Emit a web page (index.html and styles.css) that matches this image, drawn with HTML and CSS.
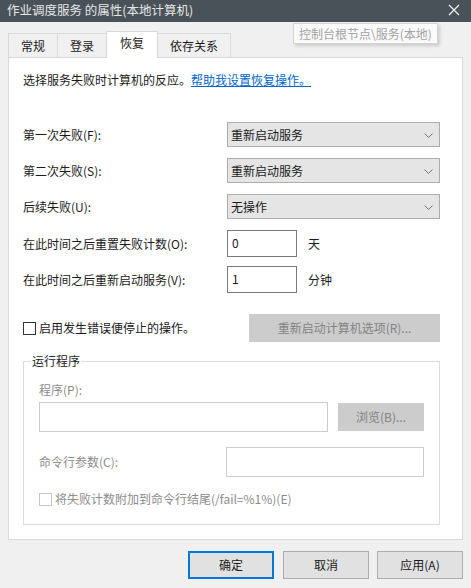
FILE: index.html
```html
<!DOCTYPE html>
<html lang="zh-CN">
<head>
<meta charset="utf-8">
<title>作业调度服务 的属性(本地计算机)</title>
<link rel="stylesheet" href="styles.css">
</head>
<body>
<div class="window">
  <div class="titlebar">
    <span class="title">作业调度服务 的属性(本地计算机)</span>
    <svg class="close" width="12" height="12" viewBox="0 0 12 12"><path d="M1 1L11 11M11 1L1 11" stroke="#f2f2f2" stroke-width="1.2" fill="none"/></svg>
  </div>
  <div class="tooltip">控制台根节点\服务(本地)</div>
  <div class="tabs">
    <div class="tab">常规</div>
    <div class="tab">登录</div>
    <div class="tab active">恢复</div>
    <div class="tab">依存关系</div>
  </div>
  <div class="panel">
    <p class="intro">选择服务失败时计算机的反应。<a class="link" href="#">帮助我设置恢复操作。</a></p>

    <div class="row row-first">
      <span class="label">第一次失败(F):</span>
      <div class="select"><span>重新启动服务</span><svg width="9" height="5" viewBox="0 0 9 5"><path d="M0.5 0.5L4.5 4.5L8.5 0.5" stroke="#777" fill="none"/></svg></div>
    </div>
    <div class="row">
      <span class="label">第二次失败(S):</span>
      <div class="select"><span>重新启动服务</span><svg width="9" height="5" viewBox="0 0 9 5"><path d="M0.5 0.5L4.5 4.5L8.5 0.5" stroke="#777" fill="none"/></svg></div>
    </div>
    <div class="row">
      <span class="label">后续失败(U):</span>
      <div class="select"><span>无操作</span><svg width="9" height="5" viewBox="0 0 9 5"><path d="M0.5 0.5L4.5 4.5L8.5 0.5" stroke="#777" fill="none"/></svg></div>
    </div>
    <div class="row row-input">
      <span class="label">在此时间之后重置失败计数(O):</span>
      <div class="input">0</div>
      <span class="unit">天</span>
    </div>
    <div class="row row-input2">
      <span class="label">在此时间之后重新启动服务(V):</span>
      <div class="input">1</div>
      <span class="unit">分钟</span>
    </div>

    <div class="row row-check">
      <label class="check"><span class="box"></span>启用发生错误便停止的操作。</label>
      <div class="btn btn-disabled btn-restart">重新启动计算机选项(R)...</div>
    </div>

    <fieldset class="group">
      <legend>运行程序</legend>
      <div class="dim prog-label">程序(P):</div>
      <div class="prog-row">
        <div class="input input-dis prog-input"></div>
        <div class="btn btn-disabled btn-browse">浏览(B)...</div>
      </div>
      <div class="cmd-row">
        <span class="dim">命令行参数(C):</span>
        <div class="input input-dis cmd-input"></div>
      </div>
      <label class="check check-dis"><span class="box"></span>将失败计数附加到命令行结尾(/fail=%1%)(E)</label>
    </fieldset>
  </div>
  <div class="buttons">
    <div class="btn btn-ok">确定</div>
    <div class="btn">取消</div>
    <div class="btn">应用(A)</div>
  </div>
</div>
</body>
</html>
```
FILE: styles.css
```css
* { box-sizing: border-box; }
html, body { margin: 0; padding: 0; }
body {
  width: 471px;
  height: 588px;
  overflow: hidden;
  background: #f0f0f0;
  font-family: "Noto Sans CJK SC", "Noto Sans", sans-serif;
  font-size: 12px;
  line-height: 16px;
  color: #1a1a1a;
}
.window {
  position: relative;
  height: 588px;
}
.titlebar {
  height: 22px;
  background: #4a5259;
  display: flex;
  align-items: center;
  justify-content: space-between;
  padding: 0 11px 0 7px;
}
.title {
  color: #e6e6e6;
  font-size: 12.5px;
  line-height: 16px;
  margin-top: -2px;
}
.close { margin-top: -3px; }
.tooltip {
  position: absolute;
  left: 293px;
  top: 23px;
  padding: 2px 5px 1px 5px;
  background: #fafafa;
  border: 1px solid #d4d4d4;
  color: #a3a3a3;
  font-size: 12px;
  line-height: 16px;
  box-shadow: 2px 2px 3px rgba(0,0,0,0.15);
  z-index: 5;
}
.tabs {
  display: flex;
  align-items: flex-end;
  height: 35px;
  padding-left: 8px;
}
.tab {
  height: 24px;
  padding: 0 12px;
  border: 1px solid #d9d9d9;
  border-bottom: none;
  background: #f0f0f0;
  margin-right: -1px;
  line-height: 24px;
  font-size: 12px;
}
.tab.active {
  height: 27px;
  background: #fff;
  margin-bottom: -1px;
  position: relative;
  z-index: 2;
  line-height: 22px;
  padding: 0 13px;
}
.panel {
  margin: 0 8px 0 8px;
  width: 455px;
  height: 483px;
  background: #fff;
  border: 1px solid #d9d9d9;
  padding: 14px 0 0 14px;
}
.intro { margin: 0; }
.link { color: #0066cc; text-decoration: underline; }
.row {
  display: flex;
  align-items: center;
  margin-top: 11px;
}
.row-first { margin-top: 34px; }
.row-input2 { margin-top: 9px; }
.label { width: 204px; flex: none; }
.select {
  width: 213px;
  height: 25px;
  background: #e5e5e5;
  border: 1px solid #adadad;
  display: flex;
  align-items: center;
  justify-content: space-between;
  padding: 0 6px 0 3px;
}
.select svg { margin-top: 1px; }
.input {
  width: 70px;
  height: 27px;
  border: 1px solid #7a7a7a;
  background: #fff;
  padding: 4px 0 0 4px;
}
.unit { margin-left: 11px; }
.row-check { margin-top: 21px; justify-content: space-between; width: 417px; }
.check { display: flex; align-items: center; }
.box {
  width: 13px;
  height: 13px;
  border: 1px solid #333;
  background: #fff;
  margin-right: 3px;
}
.btn {
  width: 86px;
  height: 28px;
  background: #e1e1e1;
  border: 1px solid #adadad;
  display: flex;
  align-items: center;
  justify-content: center;
}
.btn-disabled {
  background: #cccccc;
  border-color: #cccccc;
  color: #838383;
}
.btn-restart { width: 191px; }
.group {
  margin: 11px 0 0 0;
  width: 417px;
  border: 1px solid #dcdcdc;
  padding: 0 15px 17px 15px;
}
.group legend {
  padding: 0 1px;
  margin-left: -8px;
  color: #222;
}
.dim { color: #8c8c8c; }
.prog-label { margin-top: 13px; }
.prog-row {
  display: flex;
  align-items: center;
  justify-content: space-between;
  margin-top: 4px;
}
.input-dis { border-color: #cccccc; }
.prog-input { width: 289px; height: 30px; }
.btn-browse { width: 86px; height: 28px; }
.cmd-row {
  display: flex;
  align-items: center;
  justify-content: space-between;
  margin-top: 15px;
}
.cmd-input { width: 198px; height: 30px; }
.check-dis {
  margin-top: 14px;
  color: #8c8c8c;
}
.check-dis .box { border-color: #c8c8c8; }
.buttons {
  display: flex;
  justify-content: flex-end;
  gap: 8px;
  padding: 11px 8px 0 0;
}
.btn-ok { border: 2px solid #0078d7; margin-right: 1px; }
```
